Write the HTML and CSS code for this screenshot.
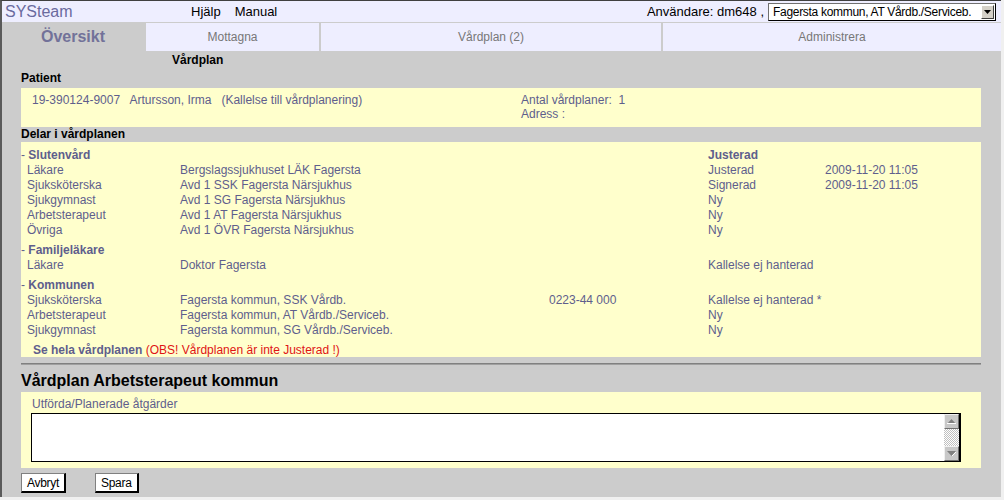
FILE: index.html
```html
<!DOCTYPE html>
<html lang="sv">
<head>
<meta charset="utf-8">
<title>SYSteam – Vårdplan</title>
<link rel="stylesheet" href="styles.css">
</head>
<body>
<div class="page">
  <header class="topbar">
    <span class="brand">SYSteam</span>
    <nav class="toplinks"><a>Hjälp</a><a>Manual</a></nav>
    <div class="user">
      <span>Användare: dm648 ,</span>
      <div class="select">
        <span class="select-text">Fagersta kommun, AT Vårdb./Serviceb.</span>
        <span class="select-btn"><svg width="7" height="4" viewBox="0 0 7 4"><path d="M0 0h7L3.5 4z" fill="#000"/></svg></span>
      </div>
    </div>
  </header>
  <div class="tabs">
    <div class="tab-home">Översikt</div>
    <div class="tab">Mottagna</div>
    <div class="tab">Vårdplan (2)</div>
    <div class="tab">Administrera</div>
  </div>
  <main class="content">
    <div class="subtitle">Vårdplan</div>
    <div class="label">Patient</div>
    <section class="box patient">
      <div class="pcol">19-390124-9007&nbsp;&nbsp; Artursson, Irma&nbsp;&nbsp; (Kallelse till vårdplanering)</div>
      <div class="pcol">
        <div>Antal vårdplaner:&nbsp; 1</div>
        <div>Adress :</div>
      </div>
    </section>
    <div class="label label-delar">Delar i vårdplanen</div>
    <section class="box parts">
      <div class="group">
        <div class="gh">- <b>Slutenvård</b></div><div></div><div></div><div class="gh"><b>Justerad</b></div><div></div>
        <div class="role">Läkare</div><div>Bergslagssjukhuset LÄK Fagersta</div><div></div><div>Justerad</div><div>2009-11-20 11:05</div>
        <div class="role">Sjuksköterska</div><div>Avd 1 SSK Fagersta Närsjukhus</div><div></div><div>Signerad</div><div>2009-11-20 11:05</div>
        <div class="role">Sjukgymnast</div><div>Avd 1 SG Fagersta Närsjukhus</div><div></div><div>Ny</div><div></div>
        <div class="role">Arbetsterapeut</div><div>Avd 1 AT Fagersta Närsjukhus</div><div></div><div>Ny</div><div></div>
        <div class="role">Övriga</div><div>Avd 1 ÖVR Fagersta Närsjukhus</div><div></div><div>Ny</div><div></div>
      </div>
      <div class="group">
        <div class="gh">- <b>Familjeläkare</b></div><div></div><div></div><div></div><div></div>
        <div class="role">Läkare</div><div>Doktor Fagersta</div><div></div><div class="wide">Kallelse ej hanterad</div>
      </div>
      <div class="group">
        <div class="gh">- <b>Kommunen</b></div><div></div><div></div><div></div><div></div>
        <div class="role">Sjuksköterska</div><div>Fagersta kommun, SSK Vårdb.</div><div>0223-44 000</div><div class="wide">Kallelse ej hanterad *</div>
        <div class="role">Arbetsterapeut</div><div>Fagersta kommun, AT Vårdb./Serviceb.</div><div></div><div>Ny</div><div></div>
        <div class="role">Sjukgymnast</div><div>Fagersta kommun, SG Vårdb./Serviceb.</div><div></div><div>Ny</div><div></div>
      </div>
      <div class="seeall"><b>Se hela vårdplanen</b> <span class="warn">(OBS! Vårdplanen är inte Justerad !)</span></div>
    </section>
    <div class="rule"></div>
    <h2 class="plan-title">Vårdplan Arbetsterapeut kommun</h2>
    <section class="box actions">
      <div class="field-label">Utförda/Planerade åtgärder</div>
      <div class="textarea">
        <div class="ta-text"></div>
        <div class="scrollbar">
          <span class="sb-btn"><svg width="9" height="5" viewBox="0 0 9 5"><path d="M4.5 0L9 5H0z" fill="#808080"/><path d="M0 4.5h9" stroke="#fff" stroke-width="1"/></svg></span>
          <span class="sb-track"></span>
          <span class="sb-btn"><svg width="9" height="5" viewBox="0 0 9 5"><path d="M0 0h9L4.5 5z" fill="#808080"/><path d="M5 5L9 1" stroke="#fff" stroke-width="1"/></svg></span>
        </div>
      </div>
    </section>
    <div class="buttons">
      <button class="btn">Avbryt</button>
      <button class="btn">Spara</button>
    </div>
  </main>
</div>
</body>
</html>
```
FILE: styles.css
```css
* { box-sizing: border-box; }
html, body { margin: 0; padding: 0; }
body {
  background: #f0f0f0;
  font-family: "Liberation Sans", Arial, sans-serif;
  font-size: 12px;
  color: #5e5e8c;
}
.page {
  width: 1001px;
  height: 497px;
  background: #cccccc;
  border-top: 1px solid #404040;
  border-left: 2px solid #5a5a5a;
  overflow: hidden;
}
.topbar {
  height: 21px;
  background: #eeeeff;
  display: flex;
  align-items: center;
  padding: 0 5px 0 3px;
}
.brand {
  width: 186px;
  font-size: 16px;
  color: #6a6a9e;
  line-height: 21px;
}
.toplinks { display: flex; gap: 14px; font-size: 13px; color: #000; }
.toplinks a { color: #000; text-decoration: none; }
.user {
  margin-left: auto;
  display: flex;
  align-items: center;
  gap: 4px;
  font-size: 13px;
  color: #000;
}
.select {
  width: 228px;
  height: 18px;
  background: #fff;
  border: 1px solid #000;
  border-top-color: #707070;
  border-left-color: #707070;
  display: flex;
  align-items: center;
  padding: 0 1px 0 4px;
}
.select-text { flex: 1; font-size: 12px; color: #000; letter-spacing: -0.3px; white-space: nowrap; overflow: hidden; }
.select-btn {
  width: 13px;
  height: 14px;
  background: #d4d0c8;
  border: 1px solid #fff;
  border-right-color: #404040;
  border-bottom-color: #404040;
  display: flex;
  align-items: center;
  justify-content: center;
}
.tabs {
  display: grid;
  grid-template-columns: 142px 173px 340px 1fr;
  column-gap: 2px;
  padding-top: 1px;
  height: 29px;
}
.tab-home {
  display: flex;
  align-items: center;
  justify-content: center;
  font-size: 16px;
  font-weight: bold;
  color: #727299;
}
.tab {
  background: #eeeeff;
  display: flex;
  align-items: center;
  justify-content: center;
  color: #777777;
}
.content { padding: 0 20px 0 19px; }
.subtitle {
  margin-left: 151px;
  font-weight: bold;
  color: #000;
  line-height: 18px;
}
.label {
  font-weight: bold;
  color: #000;
  line-height: 19px;
}
.label-delar { line-height: 15px; }
.box { background: #ffffcc; }
.patient {
  display: grid;
  grid-template-columns: 489px 1fr;
  padding: 5px 0 6px 11px;
  line-height: 14px;
  height: 39px;
}
.parts { padding: 6px 0 0 0; line-height: 15px; }
.group {
  display: grid;
  grid-template-columns: 159px 369px 159px 117px 1fr;
  margin-bottom: 5px;
  white-space: nowrap;
}
.group .role { padding-left: 6px; }
.group .wide { grid-column: span 2; }
.gh b { font-weight: bold; }
.seeall { padding-left: 12px; height: 14px; }
.warn { color: #e01414; }
.rule {
  margin-top: 6px;
  height: 2px;
  border-top: 1px solid #808080;
  border-bottom: 1px solid #a0a0a0;
}
.plan-title {
  margin: 6px 0 1px;
  font-size: 16px;
  line-height: 20px;
  font-weight: bold;
  color: #000;
}
.actions { padding: 4px 20px 6px 10px; height: 76px; }
.field-label { padding-left: 1px; line-height: 16px; }
.textarea {
  margin-top: 1px;
  height: 49px;
  width: 930px;
  background: #fff;
  border: 1px solid #000;
  border-right-width: 2px;
  border-bottom-width: 1px;
  display: flex;
}
.ta-text { flex: 1; }
.scrollbar { width: 15px; display: flex; flex-direction: column; }
.sb-btn {
  height: 15px;
  background: #c8c8c8;
  border: 1px solid #f0f0f0;
  border-right-color: #707070;
  border-bottom-color: #707070;
  display: flex;
  align-items: center;
  justify-content: center;
}
.sb-track {
  flex: 1;
  background: repeating-conic-gradient(#c0c0c0 0 25%, #ffffff 0 50%) 0 0 / 2px 2px;
}
.buttons { display: flex; gap: 29px; margin-top: 5px; }
.btn {
  height: 20px;
  padding: 0 5px;
  background: #fff;
  border: 1px solid #000;
  border-top-color: #808080;
  border-left-color: #808080;
  border-right-width: 2px;
  border-bottom-width: 2px;
  font-family: "Liberation Sans", Arial, sans-serif;
  font-size: 12px;
  letter-spacing: -0.3px;
  color: #000;
}
```
